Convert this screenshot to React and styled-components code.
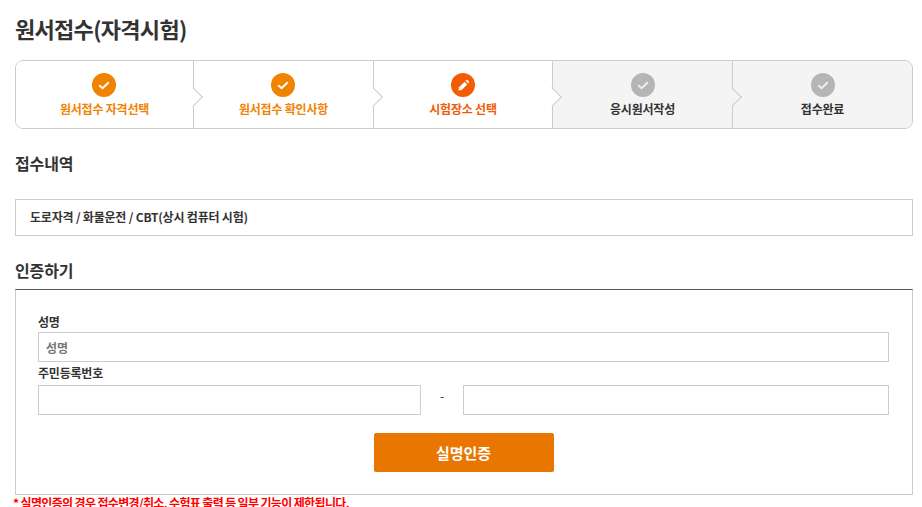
import React from 'react';
import styled, { createGlobalStyle } from 'styled-components';

const steps = [
  { label: '원서접수 자격선택', state: 'done' },
  { label: '원서접수 확인사항', state: 'done' },
  { label: '시험장소 선택', state: 'current' },
  { label: '응시원서작성', state: 'todo' },
  { label: '접수완료', state: 'todo' },
];

const STEP_COLORS = { done: '#f08300', current: '#f25c05', todo: '#b5b5b5' };
const LABEL_COLORS = { done: '#f08300', current: '#f25c05', todo: '#333' };

const App = () => {
  return (
    <Page>
      <GlobalStyle />
      <Title>원서접수(자격시험)</Title>
      <StepList>
        {steps.map(step => (
          <Step key={step.label} $state={step.state}>
            <StepCircle $state={step.state}>
              {step.state === 'current' ? (
                <svg width="13" height="13" viewBox="0 0 14 14">
                  <path d="M1.5 12.5 2.2 9 8.2 3l2.8 2.8-6 6z" fill="#fff" />
                  <path d="M9.2 2l.8-.8a1 1 0 0 1 1.4 0l1.4 1.4a1 1 0 0 1 0 1.4l-.8.8z" fill="#fff" />
                </svg>
              ) : (
                <svg width="14" height="14" viewBox="0 0 14 14">
                  <path d="M2.2 7.2 5.6 10.2 11.8 4.2" fill="none" stroke={step.state === 'todo' ? '#eee' : '#fff'} strokeWidth="2" />
                </svg>
              )}
            </StepCircle>
            <StepLabel $state={step.state}>{step.label}</StepLabel>
          </Step>
        ))}
      </StepList>

      <SectionTitle>접수내역</SectionTitle>
      <InfoBox>도로자격 / 화물운전 / CBT(상시 컴퓨터 시험)</InfoBox>

      <SectionTitle $second>인증하기</SectionTitle>
      <AuthBox>
        <FieldLabel>성명</FieldLabel>
        <TextInput placeholder="성명" />
        <FieldLabel $lower>주민등록번호</FieldLabel>
        <IdRow>
          <TextInput />
          <Dash>-</Dash>
          <TextInput />
        </IdRow>
        <ButtonRow>
          <SubmitButton type="button">실명인증</SubmitButton>
        </ButtonRow>
      </AuthBox>
      <Notice>* 실명인증의 경우 접수변경/취소, 수험표 출력 등 일부 기능이 제한됩니다.</Notice>
    </Page>
  );
};

export default App;

const GlobalStyle = createGlobalStyle`
  html, body {
    margin: 0;
    height: 507px;
    overflow: hidden;
    background: #fff;
  }
  * {
    box-sizing: border-box;
  }
`;

const Page = styled.div`
  width: 922px;
  padding: 0 9px 0 15px;
  color: #333;
  font-family: 'Noto Sans CJK KR', 'Noto Sans', sans-serif;
`;

const Title = styled.h1`
  margin: 0;
  padding-top: 11px;
  height: 60px;
  font-size: 22px;
  line-height: 34px;
  font-weight: 700;
  letter-spacing: -0.7px;
`;

const StepList = styled.ol`
  display: grid;
  grid-template-columns: 178px 180px 179px 180px 1fr;
  height: 69px;
  margin: 0;
  padding: 0;
  list-style: none;
  border: 1px solid #ccc;
  border-radius: 8px;
  overflow: hidden;
`;

const Step = styled.li`
  position: relative;
  display: flex;
  flex-direction: column;
  align-items: center;
  padding-top: 12px;
  background: ${({ $state }) => ($state === 'todo' ? '#f4f4f4' : '#fff')};
  border-right: 1px solid #ccc;

  &:last-child {
    border-right: 0;
  }

  &:not(:last-child)::after {
    content: '';
    position: absolute;
    z-index: 1;
    top: 29px;
    right: -7px;
    width: 13px;
    height: 13px;
    background: ${({ $state }) => ($state === 'todo' ? '#f4f4f4' : '#fff')};
    border-top: 1px solid #ccc;
    border-right: 1px solid #ccc;
    transform: rotate(45deg);
  }
`;

const StepCircle = styled.span`
  display: flex;
  align-items: center;
  justify-content: center;
  width: 24px;
  height: 24px;
  margin-right: ${({ $state }) => ($state === 'done' ? '2px' : '0')};
  border-radius: 50%;
  background: ${({ $state }) => STEP_COLORS[$state]};
`;

const StepLabel = styled.span`
  margin-top: 3px;
  font-size: 12px;
  line-height: 18px;
  font-weight: 700;
  letter-spacing: -0.2px;
  color: ${({ $state }) => LABEL_COLORS[$state]};
`;

const SectionTitle = styled.h2`
  margin: ${({ $second }) => ($second ? '22px 0 7px' : '22px 0 24px')};
  font-size: 16px;
  line-height: 24px;
  font-weight: 700;
  letter-spacing: -0.1px;
`;

const InfoBox = styled.div`
  height: 37px;
  padding-left: 14px;
  border: 1px solid #ccc;
  font-size: 12px;
  line-height: 34px;
  font-weight: 700;
  letter-spacing: -0.2px;
`;

const AuthBox = styled.div`
  height: 206px;
  padding: 23px 23px 0 22px;
  border: 1px solid #ccc;
  border-top-color: #555;
`;

const FieldLabel = styled.div`
  height: ${({ $lower }) => ($lower ? '23px' : '19px')};
  padding-top: ${({ $lower }) => ($lower ? '2px' : '0')};
  font-size: 12px;
  line-height: 18px;
  font-weight: 700;
  letter-spacing: -0.2px;
`;

const TextInput = styled.input`
  display: block;
  flex: 1;
  width: 100%;
  min-width: 0;
  height: 30px;
  padding: 0 7px;
  border: 1px solid #ccc;
  border-radius: 0;
  outline: none;
  background: #fff;
  font-family: inherit;
  font-size: 12px;
  font-weight: 700;

  &::placeholder {
    color: #777;
    opacity: 1;
  }
`;

const IdRow = styled.div`
  display: grid;
  grid-template-columns: 383px 42px 1fr;
  align-items: center;
`;

const Dash = styled.span`
  padding-bottom: 8px;
  color: #222;
  font-size: 12px;
  line-height: 18px;
  text-align: center;
`;

const ButtonRow = styled.div`
  display: flex;
  justify-content: center;
  margin-top: 18px;
`;

const SubmitButton = styled.button`
  width: 180px;
  height: 39px;
  border: 0;
  border-radius: 2px;
  background: #e87600;
  color: #fff;
  font-family: inherit;
  font-size: 15px;
  font-weight: 700;
`;

const Notice = styled.p`
  margin: 0 0 0 -2px;
  font-size: 12px;
  line-height: 16px;
  font-weight: 700;
  letter-spacing: -0.65px;
  color: #f00;
`;
